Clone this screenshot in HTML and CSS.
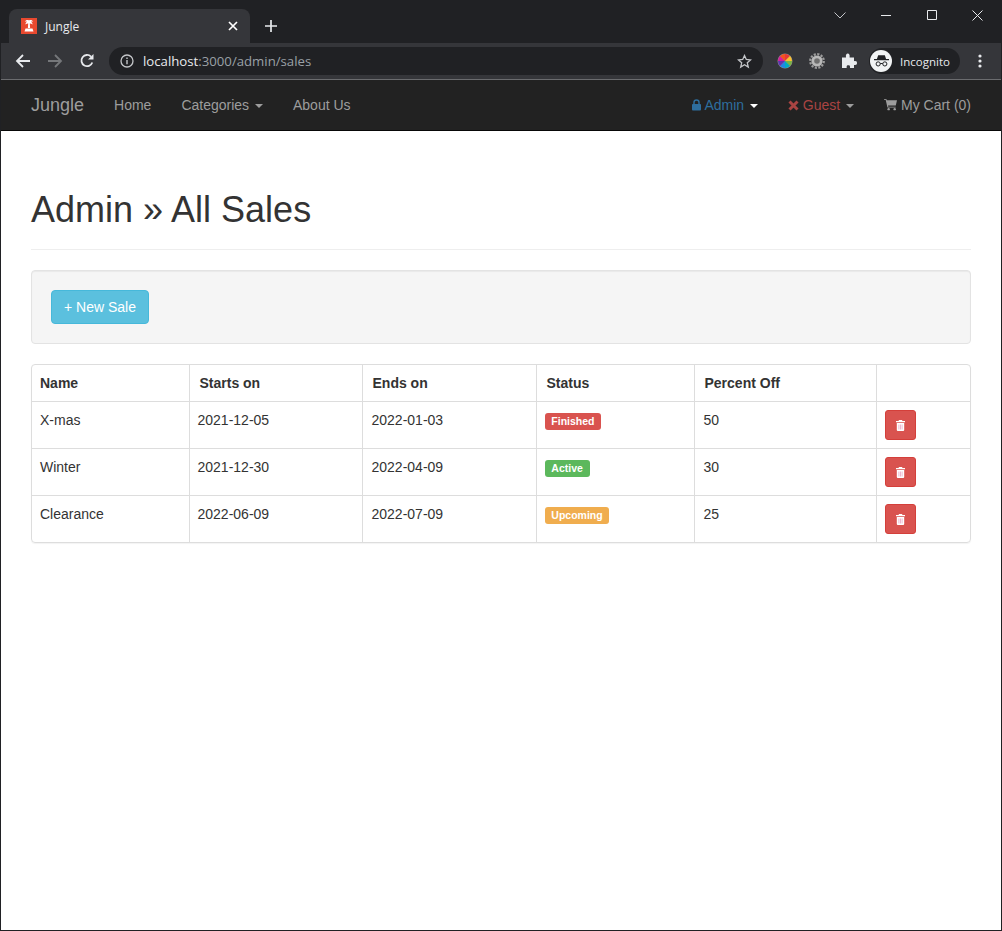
FILE: index.html
```html
<!DOCTYPE html>
<html lang="en">
<head>
  <meta charset="UTF-8" />
  <meta name="viewport" content="width=device-width, initial-scale=1.0" />
  <title>Jungle</title>
  <link rel="stylesheet" href="styles.css">
</head>
<body>
  <div class="window">
    <div class="tabstrip">
      <div class="tab">
        <span class="favicon">
          <svg width="16" height="16" viewBox="0 0 16 16"><path d="M0 0h16v16H0z" fill="#e8492f"/><path d="M8 2.500c-1.600-.9-3.300-.3-4.200 1.300.9-.3 1.600-.3 2.200 0-.9.500-1.500 1.400-1.500 2.600C5.400 5.700 6.300 5.400 7.200 5.500L6.900 10h2.200l-.3-4.500c.9-.1 1.800.2 2.700.9 0-1.200-.6-2.100-1.500-2.600.6-.3 1.300-.3 2.200 0C11.300 2.200 9.600 1.600 8 2.500zM4.500 10.500h7l1 3h-9z" fill="#fff"/></svg>
        </span>
        <span class="tab-title">Jungle</span>
        <svg class="tab-close" width="10" height="10" viewBox="0 0 10 10"><path d="M1 1l8 8M9 1l-8 8" stroke="#fff" stroke-width="1.700"/></svg>
      </div>
      <svg class="new-tab" width="12" height="12" viewBox="0 0 12 12"><path d="M6 0v12M0 6h12" stroke="#e8eaed" stroke-width="1.700"/></svg>
      <div class="window-controls">
        <svg class="ctl ctl-drop" width="12" height="7" viewBox="0 0 12 7"><path d="M.5.5L6 6 11.500.5" fill="none" stroke="#c4c6c9"/></svg>
        <svg class="ctl ctl-min" width="10" height="10" viewBox="0 0 10 10"><path d="M0 5.500h10" stroke="#e8eaed"/></svg>
        <svg class="ctl ctl-max" width="10" height="10" viewBox="0 0 10 10"><path d="M.5.500h9v9h-9z" fill="none" stroke="#e8eaed"/></svg>
        <svg class="ctl ctl-close" width="11" height="11" viewBox="0 0 11 11"><path d="M.5.5l10 10M10.500.5l-10 10" stroke="#e8eaed"/></svg>
      </div>
    </div>

    <div class="toolbar">
      <svg class="tool" width="16" height="16" viewBox="0 0 16 16"><path d="M15 8H2M8 2L2 8l6 6" fill="none" stroke="#e8eaed" stroke-width="1.800"/></svg>
      <svg class="tool" width="16" height="16" viewBox="0 0 16 16"><path d="M1 8h13M8 2l6 6-6 6" fill="none" stroke="#75777a" stroke-width="1.800"/></svg>
      <svg class="tool" width="16" height="16" viewBox="0 0 16 16"><path d="M13.300 9.500A5.600 5.600 0 1 1 12 3.600" fill="none" stroke="#e8eaed" stroke-width="1.800"/><path d="M14.500 1v5.500H9z" fill="#e8eaed"/></svg>
      <div class="omnibox">
        <svg width="14" height="14" viewBox="0 0 14 14"><circle cx="7" cy="7" r="6" fill="none" stroke="#c4c6c9" stroke-width="1.300"/><path d="M7 6v4.200M7 3.500v1.500" stroke="#c4c6c9" stroke-width="1.400"/></svg>
        <span class="url"><b>localhost</b>:3000/admin/sales</span>
        <svg class="star" width="15" height="15" viewBox="0 0 15 15"><path d="M7.500 1.500l1.800 4 4.200.4-3.200 2.900 1 4.300-3.800-2.300-3.800 2.300 1-4.300L1.500 5.900l4.200-.4z" fill="none" stroke="#c4c6c9" stroke-width="1.300"/></svg>
      </div>
      <div class="extensions">
        <svg width="16" height="16" viewBox="0 0 16 16"><circle cx="8" cy="8" r="7.500" fill="#8a8c8e"/><path d="M8 8V1a7 7 0 0 1 5 2z" fill="#e53935"/><path d="M8 8l5-5a7 7 0 0 1 2 5z" fill="#fbc02d"/><path d="M8 8h7a7 7 0 0 1-2 5z" fill="#7cb342"/><path d="M8 8l5 5a7 7 0 0 1-5 2z" fill="#00acc1"/><path d="M8 8v7a7 7 0 0 1-5-2z" fill="#1e88e5"/><path d="M8 8l-5 5a7 7 0 0 1-2-5z" fill="#5e35b1"/><path d="M8 8H1a7 7 0 0 1 2-5z" fill="#d81b9b"/><path d="M8 8L3 3a7 7 0 0 1 5-2z" fill="#f4511e"/></svg>
        <svg width="16" height="16" viewBox="0 0 16 16"><circle cx="8" cy="8" r="6.800" fill="none" stroke="#9c9c9c" stroke-width="2.200" stroke-dasharray="2.200 1.360"/><circle cx="8" cy="8" r="5.600" fill="#b8b8b8"/><circle cx="8" cy="8" r="2.800" fill="#6e6e6e"/></svg>
        <svg width="16" height="16" viewBox="0 0 16 16"><path d="M1 4.500h4C4.500 1.500 5.500.5 6.800.5S9 1.500 8.600 4.500h4.400v3.700c2.500-.5 3 .6 3 1.900s-.6 2.400-3 1.900V15H9c.4-2.300-.5-2.800-1.700-2.800S5.300 12.700 5.700 15H1z" fill="#e8eaed"/></svg>
      </div>
      <div class="profile">
        <span class="avatar">
          <svg width="18" height="14" viewBox="0 0 18 14"><path d="M5 0h8l1.500 4.500H18V6H0V4.500h3.500z" fill="#202124"/><circle cx="5" cy="10.500" r="2.500" fill="none" stroke="#202124" stroke-width="1.200"/><circle cx="13" cy="10.500" r="2.500" fill="none" stroke="#202124" stroke-width="1.200"/><path d="M7.500 10h3" stroke="#202124" stroke-width="1.200"/></svg>
        </span>
        <span>Incognito</span>
      </div>
      <svg class="menu-dots" width="4" height="14" viewBox="0 0 4 14"><circle cx="2" cy="2" r="1.600" fill="#e8eaed"/><circle cx="2" cy="7" r="1.600" fill="#e8eaed"/><circle cx="2" cy="12" r="1.600" fill="#e8eaed"/></svg>
    </div>

    <nav class="navbar">
      <a class="brand">Jungle</a>
      <ul class="nav">
        <li>Home</li>
        <li>Categories <span class="caret"></span></li>
        <li>About Us</li>
      </ul>
      <ul class="nav nav-right">
        <li class="nav-admin">
          <svg width="9" height="12" viewBox="0 0 10 13"><path d="M2.200 6V3.700a2.800 2.800 0 0 1 5.600 0V6" fill="none" stroke="#2e6e9e" stroke-width="1.600"/><rect x="0" y="5.500" width="10" height="7" rx="1" fill="#2e6e9e"/></svg>
          Admin <span class="caret caret-white"></span>
        </li>
        <li class="nav-guest">
          <svg width="11" height="11" viewBox="0 0 11 11"><path d="M1.500 1.500l8 8M9.500 1.500l-8 8" stroke="#a94442" stroke-width="3"/></svg>
          Guest <span class="caret"></span>
        </li>
        <li>
          <svg width="13" height="13" viewBox="0 0 14 13"><path d="M0 .5h2.500l.5 1.500h11l-1.300 5.500H4.300l.3 1.300h8v1H3.700L1.800 1.500H0z" fill="#9d9d9d"/><circle cx="5" cy="11.500" r="1.300" fill="#9d9d9d"/><circle cx="11.500" cy="11.500" r="1.300" fill="#9d9d9d"/></svg>
          My Cart (0)
        </li>
      </ul>
    </nav>

    <main class="content">
      <h1 class="page-header">Admin &raquo; All Sales</h1>

      <div class="well">
        <a class="btn btn-info">+ New Sale</a>
      </div>

      <div class="panel">
        <table class="sales">
          <colgroup>
            <col class="col-name"><col class="col-date"><col class="col-date2"><col class="col-status"><col class="col-pct"><col>
          </colgroup>
          <thead>
            <tr><th>Name</th><th>Starts on</th><th>Ends on</th><th>Status</th><th>Percent Off</th><th></th></tr>
          </thead>
          <tbody>
            <tr>
              <td>X-mas</td><td>2021-12-05</td><td>2022-01-03</td>
              <td><span class="label label-danger">Finished</span></td>
              <td>50</td>
              <td><a class="btn-trash"><svg width="9" height="11" viewBox="0 0 9 11"><path d="M3 0h3l.5 1H9v1.200H0V1h2.500zM.8 3h7.400v7a1 1 0 0 1-1 1H1.800a1 1 0 0 1-1-1z" fill="#fff"/><path d="M2.900 4.500V9.500M4.500 4.500V9.500M6.100 4.500V9.500" stroke="#e9a5c3" stroke-width=".8"/></svg></a></td>
            </tr>
            <tr>
              <td>Winter</td><td>2021-12-30</td><td>2022-04-09</td>
              <td><span class="label label-success">Active</span></td>
              <td>30</td>
              <td><a class="btn-trash"><svg width="9" height="11" viewBox="0 0 9 11"><path d="M3 0h3l.5 1H9v1.200H0V1h2.500zM.8 3h7.400v7a1 1 0 0 1-1 1H1.800a1 1 0 0 1-1-1z" fill="#fff"/><path d="M2.900 4.500V9.500M4.500 4.500V9.500M6.100 4.500V9.500" stroke="#e9a5c3" stroke-width=".8"/></svg></a></td>
            </tr>
            <tr>
              <td>Clearance</td><td>2022-06-09</td><td>2022-07-09</td>
              <td><span class="label label-warning">Upcoming</span></td>
              <td>25</td>
              <td><a class="btn-trash"><svg width="9" height="11" viewBox="0 0 9 11"><path d="M3 0h3l.5 1H9v1.200H0V1h2.500zM.8 3h7.400v7a1 1 0 0 1-1 1H1.800a1 1 0 0 1-1-1z" fill="#fff"/><path d="M2.900 4.500V9.500M4.500 4.500V9.500M6.100 4.500V9.500" stroke="#e9a5c3" stroke-width=".8"/></svg></a></td>
            </tr>
          </tbody>
        </table>
      </div>
    </main>
  </div>
</body>
</html>
```

FILE: styles.css
```css
* { box-sizing: border-box; }
html, body { margin: 0; height: 100%; }
body { font-family: "Liberation Sans", Arial, sans-serif; font-size: 14px; color: #333; background: #fff; }

.window { height: 931px; border: 1px solid #202124; border-top: 0; display: flex; flex-direction: column; }

/* browser chrome */
.tabstrip { height: 43px; background: #202124; display: flex; align-items: flex-end; padding-left: 8px; }
.tab { width: 241px; height: 34px; background: #35363a; border-radius: 8px 8px 0 0; display: flex; align-items: center; padding: 0 12px; color: #e8eaed; font-family: "Open Sans", sans-serif; font-size: 12px; }
.favicon { width: 16px; height: 16px; margin-right: 8px; display: flex; }
.tab-title { flex: 1; }
.new-tab { margin: 0 0 11px 15px; }
.window-controls { margin-left: auto; align-self: flex-start; display: flex; align-items: center; height: 30px; }
.ctl-drop { margin-right: 35px; }
.ctl-min { margin-right: 36px; }
.ctl-max { margin-right: 35px; }
.ctl-close { margin-right: 18px; }

.toolbar { height: 37px; background: #35363a; border-bottom: 1px solid #6b6c6f; display: flex; align-items: center; padding-left: 14px; }
.tool { margin-right: 16px; }
.omnibox { width: 654px; height: 28px; margin-left: -2px; background: #202124; border-radius: 14px; display: flex; align-items: center; padding: 0 11px; color: #9aa0a6; font-family: "Open Sans", sans-serif; font-size: 13.200px; }
.url { flex: 1; margin-left: 9px; }
.url b { font-weight: 400; color: #e8eaed; }
.extensions { display: flex; gap: 16px; margin-left: 14px; }
.profile { width: 91px; height: 26px; margin-left: 12px; background: #202124; border-radius: 13px; display: flex; align-items: center; gap: 8px; padding-left: 1px; color: #e8eaed; font-family: "Open Sans", sans-serif; font-size: 11.500px; }
.avatar { width: 22px; height: 22px; border-radius: 50%; background: #f1f3f4; display: flex; align-items: center; justify-content: center; }
.avatar svg { width: 15px; height: 12px; }
.menu-dots { margin-left: 18px; }

/* navbar */
.navbar { height: 51px; background: #222; border-bottom: 1px solid #080808; display: flex; align-items: center; padding: 0 30px; color: #9d9d9d; }
.brand { font-size: 18px; margin-right: 15px; }
.nav { list-style: none; margin: 0; padding: 0; display: flex; }
.nav li { padding: 0 15px; white-space: nowrap; }
.nav-right { margin-left: auto; }
.nav-right li:last-child { padding-right: 0; }
.nav-right svg { vertical-align: -1px; }
.nav-admin { color: #2e6e9e; }
.nav-guest { color: #a94442; }
.caret { display: inline-block; width: 0; height: 0; margin-left: 2px; vertical-align: middle; border-top: 4px solid #9d9d9d; border-left: 4px solid transparent; border-right: 4px solid transparent; }
.caret-white { border-top-color: #fff; }

/* page */
.content { padding: 0 30px; }
.page-header { font-size: 36px; font-weight: 500; line-height: 40px; margin: 59px 0 20px; padding-bottom: 19px; border-bottom: 1px solid #eee; }
.well { height: 74px; background: #f5f5f5; border: 1px solid #e3e3e3; border-radius: 4px; padding: 19px; margin-bottom: 20px; box-shadow: inset 0 1px 1px rgba(0,0,0,.05); }
.btn { display: inline-block; padding: 6px 12px; line-height: 20px; border-radius: 4px; border: 1px solid #46b8da; }
.btn-info { background: #5bc0de; color: #fff; }

.panel { border: 1px solid #ddd; border-radius: 4px; box-shadow: 0 1px 1px rgba(0,0,0,.05); }
.sales { width: 100%; border-collapse: collapse; table-layout: fixed; line-height: 20px; }
.col-name { width: 157px; }
.col-date { width: 173px; }
.col-date2 { width: 174px; }
.col-status { width: 158px; }
.col-pct { width: 182px; }
.sales th, .sales td { border: 1px solid #ddd; text-align: left; vertical-align: top; padding: 8px; }
.sales tr:first-child th { border-top: 0; }
.sales th:first-child, .sales td:first-child { border-left: 0; }
.sales th:last-child, .sales td:last-child { border-right: 0; }
.sales tr:last-child td { border-bottom: 0; height: 46px; }
.sales th { height: 36px; padding-left: 10px; }
.sales td { height: 47px; }
.sales th:first-child { padding-left: 8px; }
.sales td:nth-child(3), .sales td:nth-child(5) { padding-left: 9px; }

.label { display: inline-block; font-size: 10.500px; font-weight: 700; line-height: 1; color: #fff; padding: 3px 6.800px; border-radius: 3px; vertical-align: top; margin-top: 3px; }
.label-danger { background: #d9534f; }
.label-success { background: #5cb85c; }
.label-warning { background: #f0ad4e; }
.btn-trash { display: flex; align-items: center; justify-content: center; width: 31px; height: 30px; background: #d9534f; border: 1px solid #d43f3a; border-radius: 3px; }
```
